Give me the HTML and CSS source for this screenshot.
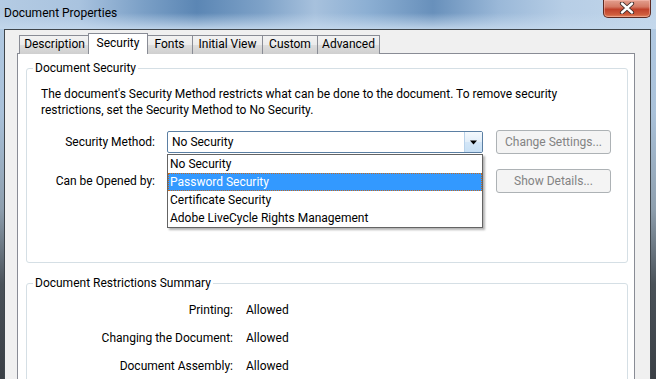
FILE: index.html
```html
<!DOCTYPE html>
<html>
<head>
<meta charset="utf-8">
<title>Document Properties</title>
<link rel="stylesheet" href="styles.css">
</head>
<body>
<div class="window">
  <div class="titlebar">
    <span class="title">Document Properties</span>
    <button class="close" aria-label="Close">
      <svg width="16" height="12" viewBox="0 0 16 12">
        <path d="M3 1.5 L13 10.5 M13 1.5 L3 10.5" stroke="#3b2a28" stroke-width="4.2" stroke-linecap="round"/>
        <path d="M3 1.5 L13 10.5 M13 1.5 L3 10.5" stroke="#ffffff" stroke-width="2.4" stroke-linecap="round"/>
      </svg>
    </button>
  </div>
  <div class="client">
    <div class="tabs">
      <div class="tab tab-description">Description</div>
      <div class="tab tab-security active">Security</div>
      <div class="tab tab-fonts">Fonts</div>
      <div class="tab tab-initial">Initial View</div>
      <div class="tab tab-custom">Custom</div>
      <div class="tab tab-advanced">Advanced</div>
    </div>
    <div class="panel">
      <fieldset class="group group-security">
        <legend>Document Security</legend>
        <div class="group-body">
          <p class="intro">The document's Security Method restricts what can be done to the document. To remove security restrictions, set the Security Method to No Security.</p>
          <div class="form-row first">
            <span class="label">Security Method:</span>
            <div class="select-wrap">
              <div class="select">
                <span class="select-value">No Security</span>
                <span class="select-arrow">
                  <svg width="9" height="5" viewBox="0 0 9 5"><path d="M1 0.5 L8 0.5 L4.5 4.5 Z" fill="#000"/></svg>
                </span>
              </div>
              <ul class="dropdown">
                <li>No Security</li>
                <li class="selected">Password Security</li>
                <li>Certificate Security</li>
                <li>Adobe LiveCycle Rights Management</li>
              </ul>
            </div>
            <button class="btn" disabled>Change Settings...</button>
          </div>
          <div class="form-row second">
            <span class="label">Can be Opened by:</span>
            <div class="select-spacer"></div>
            <button class="btn" disabled>Show Details...</button>
          </div>
        </div>
      </fieldset>
      <fieldset class="group group-summary">
        <legend>Document Restrictions Summary</legend>
        <div class="summary">
          <span class="s-label">Printing:</span><span class="s-value">Allowed</span>
          <span class="s-label">Changing the Document:</span><span class="s-value">Allowed</span>
          <span class="s-label">Document Assembly:</span><span class="s-value">Allowed</span>
        </div>
      </fieldset>
    </div>
  </div>
</div>
</body>
</html>
```
FILE: styles.css
```css
* { box-sizing: border-box; }
html, body {
  margin: 0;
  padding: 0;
  width: 656px;
  height: 379px;
  overflow: hidden;
}
body {
  font-family: Roboto, "Noto Sans", sans-serif;
  font-size: 12px;
  color: #000;
}
.window {
  height: 379px;
  display: flex;
  flex-direction: column;
  padding: 0 5px 0 4px;
  overflow: hidden;
  background: linear-gradient(to bottom, #b3cbe4 0, #a9c1d9 30%, #8e9fae 55%, #4a5259 75%, #3a3f45 100%);
}
.titlebar {
  flex: 0 0 29px;
  height: 29px;
  margin: 0 -5px 0 -4px;
  padding: 0 5px 0 4px;
  display: flex;
  justify-content: space-between;
  align-items: flex-start;
  background:
    linear-gradient(to bottom, rgba(200,219,238,0) 0, rgba(200,219,238,0) 45%, rgba(196,216,236,0.9) 100%),
    linear-gradient(to right, #b4cbe3 0, #a9c3df 12%, #7a9fc6 22%, #5b86b4 30%, #7ea2c8 40%, #a7c1dd 48%, #8cafd3 56%, #6890bb 66%, #9ab8d8 76%, #b7cee6 86%, #c2d6ea 100%);
}
.title {
  line-height: 16px;
  padding-top: 5px;
  color: #000;
}
.close {
  width: 48px;
  height: 18px;
  margin: 0;
  padding: 0;
  border: 1px solid #5c2a22;
  border-top: 0;
  border-radius: 0 0 5px 5px;
  background: linear-gradient(to bottom, #e3a08f 0, #d47964 40%, #c0412a 55%, #cf5c3c 85%, #e1885f 100%);
  box-shadow: inset 0 0 0 1px rgba(255,200,190,0.45);
  display: flex;
  align-items: center;
  justify-content: center;
}
.close svg { display: block; margin-top: -1px; }

.client {
  flex: 1 1 auto;
  min-height: 0;
  display: flex;
  flex-direction: column;
  background: #f0f0f0;
  border: 1px solid #3f464c;
  border-bottom: 0;
  padding: 3px 15px 0 12px;
  overflow: hidden;
}
.tabs {
  flex: 0 0 21px;
  display: flex;
  align-items: flex-end;
  height: 21px;
  padding-left: 2px;
  position: relative;
  z-index: 2;
  margin-bottom: -1px;
}
.tab {
  height: 19px;
  line-height: 17px;
  padding: 0;
  text-align: center;
  border: 1px solid #898c95;
  border-bottom: 0;
  margin-left: -1px;
  background: linear-gradient(to bottom, #f2f2f2 0, #ebebeb 50%, #dddddd 51%, #cfcfcf 100%);
  color: #000;
  white-space: nowrap;
}
.tab:first-child { margin-left: 0; }
.tab-description { width: 71px; }
.tab-security { width: 60px; }
.tab-fonts { width: 47px; }
.tab-initial { width: 71px; }
.tab-custom { width: 56px; }
.tab-advanced { width: 63px; }
.tab.active {
  height: 21px;
  line-height: 19px;
  background: #fff;
  position: relative;
  z-index: 3;
  margin-left: -2px;
  margin-right: -1px;
}
.panel {
  flex: 1 1 auto;
  min-height: 0;
  background: #fff;
  border: 1px solid #898c95;
  border-bottom: 0;
  padding: 6px 6px 0 8px;
  position: relative;
  z-index: 1;
}
.group {
  margin: 0;
  padding: 0;
  border: 1px solid #d5dfe5;
  border-radius: 3px;
  min-width: 0;
}
.group legend {
  margin-left: 6px;
  padding: 0 2px;
  line-height: 16px;
}
.group-body {
  padding: 0 0 69px 14px;
}
.intro {
  margin: 10px 0 0 0;
  line-height: 16px;
  width: 540px;
}
.form-row {
  display: flex;
  align-items: center;
  height: 24px;
}
.form-row.first { margin-top: 12px; }
.form-row.second { margin-top: 15px; }
.label {
  width: 114px;
  text-align: right;
  margin-right: 12px;
  white-space: nowrap;
}
.select-wrap {
  position: relative;
  width: 316px;
  height: 22px;
  margin-right: 13px;
}
.select-spacer {
  width: 316px;
  margin-right: 13px;
}
.select {
  height: 22px;
  border: 1px solid #5b7fa3;
  border-radius: 2px;
  background: #fff;
  display: flex;
  align-items: center;
  justify-content: space-between;
}
.select-value {
  padding-left: 4px;
  line-height: 18px;
}
.select-arrow {
  width: 18px;
  height: 20px;
  display: flex;
  align-items: center;
  justify-content: center;
  background: linear-gradient(to bottom, #f4f9fd 0, #e2eef9 50%, #d3e6f7 51%, #c8e0f5 100%);
  border-left: 1px solid #b9d2ea;
}
.dropdown {
  position: absolute;
  left: 0;
  top: 23px;
  width: 316px;
  margin: 0;
  padding: 0;
  list-style: none;
  background: #fff;
  border: 1px solid #646464;
  box-shadow: 2px 2px 2px rgba(0,0,0,0.3);
  z-index: 5;
}
.dropdown li {
  height: 18px;
  line-height: 18px;
  padding-left: 2px;
  white-space: nowrap;
}
.dropdown li.selected {
  background: #3399ff;
  color: #fff;
  outline: 1px dotted #c56a1f;
  outline-offset: -1px;
}
.btn {
  width: 115px;
  height: 24px;
  padding: 0;
  border: 1px solid #adb2b5;
  border-radius: 3px;
  background: #f4f4f4;
  color: #838383;
  font: inherit;
}
.group-summary {
  margin-top: 12px;
  padding: 11px 0 30px 0;
}
.summary {
  display: grid;
  grid-template-columns: 206px auto;
  column-gap: 13px;
  row-gap: 12px;
  line-height: 16px;
}
.s-label { text-align: right; white-space: nowrap; }
.s-value { white-space: nowrap; }
```
